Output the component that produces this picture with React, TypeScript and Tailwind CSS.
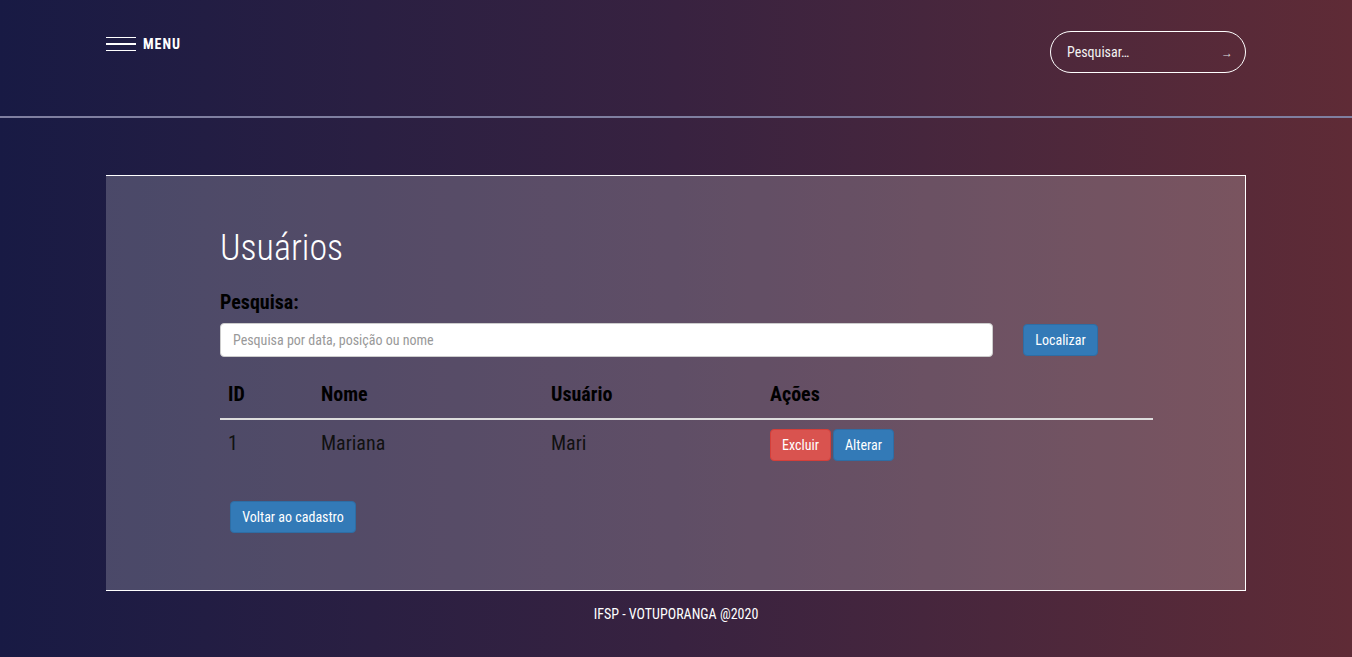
const FONT = "font-['Roboto_Condensed','Liberation_Sans_Narrow','Arial_Narrow',Roboto,sans-serif]"

const ROWS = [{ id: 1, nome: 'Mariana', usuario: 'Mari' }]

function Header() {
  return (
    <header className="h-[118px] border-b-2 border-[#7f7fa0]">
      <div className="mx-auto flex w-[1140px] items-start justify-between">
        <button className="mt-[36px] flex items-center gap-[7px] text-white">
          <span className="flex w-[30px] flex-col gap-[5px]">
            <span className="h-[1.5px] bg-white" />
            <span className="h-[1.5px] bg-white" />
            <span className="h-[1.5px] bg-white" />
          </span>
          <span className="text-[14px] font-bold leading-[16px] tracking-[1px]">MENU</span>
        </button>
        <div className="mt-[31px] flex h-[42px] w-[196px] items-center justify-between rounded-full border border-white pl-[16px] pr-[12px]">
          <span className="text-[14px] text-[#f3f3f3]">Pesquisar…</span>
          <span className="pt-[2px] text-[12px] text-[#ddd]">→</span>
        </div>
      </div>
    </header>
  )
}

function Btn({ children, color = 'blue', w }: { children: React.ReactNode; color?: 'blue' | 'red'; w: string }) {
  return (
    <button
      className={
        (color === 'red'
          ? 'h-[32px] rounded-[4px] border border-[#d43f3a] bg-[#d9534f] text-[14px] text-white '
          : 'h-[32px] rounded-[4px] border border-[#2e6da4] bg-[#337ab7] text-[14px] text-white ') + w
      }
    >
      {children}
    </button>
  )
}

export default function App() {
  return (
    <div className={`min-h-[657px] bg-gradient-to-r from-[#181a44] via-[#382240] to-[#5f2b36] ${FONT}`}>
      <Header />

      <main className="mx-auto mt-[57px] w-[1140px] border-y border-r border-white bg-white/20 pl-[114px] pt-[52px] pb-[57px]">
        <h1 className="h-[40px] text-[36px] font-light leading-[40px] text-white">Usuários</h1>

        <label className="mt-[22px] block text-[20px] font-bold leading-[24px] text-black">Pesquisa:</label>
        <div className="mt-[9px] flex items-center gap-[30px]">
          <input
            placeholder="Pesquisa por data, posição ou nome"
            className="h-[34px] w-[773px] rounded-[4px] border border-[#ccc] bg-white px-[12px] text-[14px] text-[#555] placeholder:text-[#999] outline-none"
          />
          <Btn w="w-[75px]">Localizar</Btn>
        </div>

        <div className="mt-[15px] w-[933px] text-[20px] leading-[24px]">
          <div className="grid grid-cols-[93px_230px_219px_1fr] border-b-2 border-[#ddd] pt-[10px] pb-[12px] font-bold text-black">
            <div className="px-[8px]">ID</div>
            <div className="px-[8px]">Nome</div>
            <div className="px-[8px]">Usuário</div>
            <div className="px-[8px]">Ações</div>
          </div>
          {ROWS.map((r) => (
            <div key={r.id} className="grid grid-cols-[93px_230px_219px_1fr] text-[#111]">
              <div className="px-[8px] pt-[11px]">{r.id}</div>
              <div className="px-[8px] pt-[11px]">{r.nome}</div>
              <div className="px-[8px] pt-[11px]">{r.usuario}</div>
              <div className="flex gap-[2px] px-[8px] pt-[9px] pb-[8px]">
                <Btn color="red" w="w-[61px]">Excluir</Btn>
                <Btn w="w-[61px]">Alterar</Btn>
              </div>
            </div>
          ))}
        </div>

        <div className="mt-[32px] pl-[10px]">
          <Btn w="w-[126px]">Voltar ao cadastro</Btn>
        </div>
      </main>

      <footer className="pt-[13px] pb-[33px] text-center text-[14px] leading-[20px] text-white">
        IFSP - VOTUPORANGA @2020
      </footer>
    </div>
  )
}
